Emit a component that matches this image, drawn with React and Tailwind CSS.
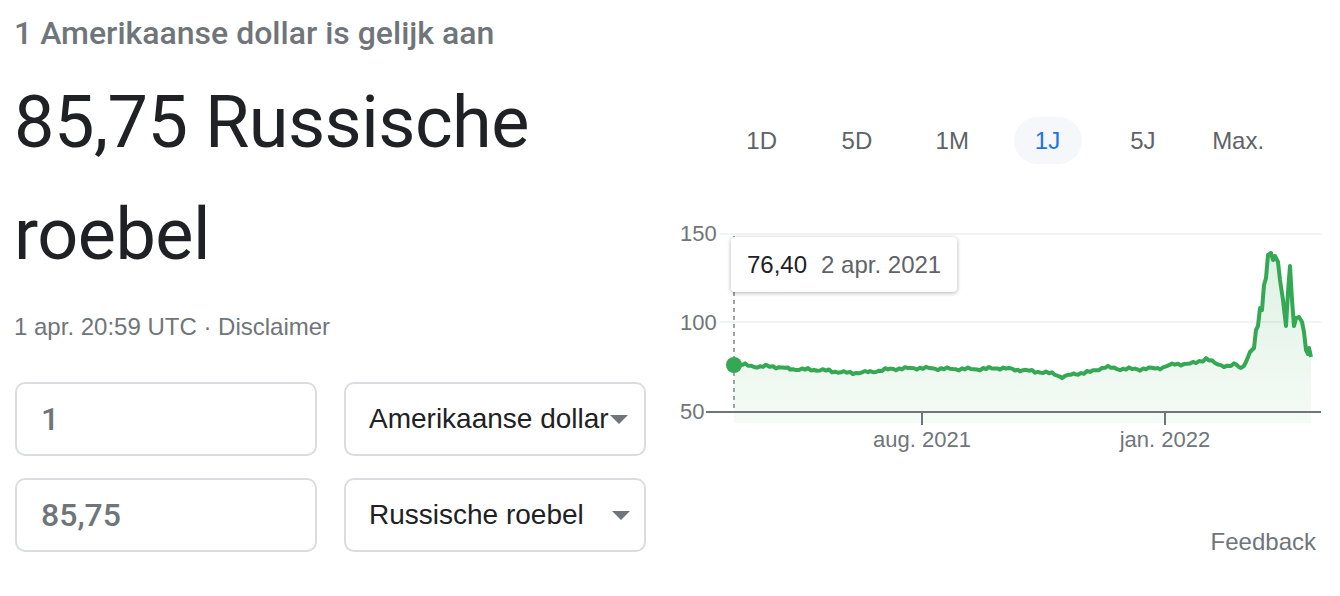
import React from "react";

const keys = [
  [734, 365], [745, 365], [760, 367], [770, 366], [790, 369], [820, 370], [850, 373],
  [870, 372], [890, 369], [920, 368], [950, 369], [980, 369], [1000, 368], [1020, 370],
  [1040, 372], [1055, 374], [1062, 377], [1075, 374], [1090, 372], [1105, 367],
  [1120, 369], [1140, 369], [1160, 368], [1175, 364], [1190, 364], [1200, 361],
  [1206, 359], [1215, 363], [1228, 367], [1236, 364], [1241, 368], [1246, 362],
  [1250, 352], [1254, 348], [1256, 330], [1258, 326], [1260, 308], [1262, 310],
  [1264, 285], [1266, 278], [1268, 255], [1271, 253], [1273, 260], [1275, 256],
  [1278, 262], [1280, 280], [1283, 300], [1286, 326], [1288, 292], [1290, 266],
  [1292, 300], [1294, 326], [1296, 318], [1299, 317], [1302, 322], [1304, 332],
  [1306, 350], [1308, 354], [1309, 348], [1311, 357],
];

const buildPoints = () => {
  const pts = [];
  for (let i = 0; i < keys.length - 1; i++) {
    const [x0, y0] = keys[i];
    const [x1, y1] = keys[i + 1];
    const step = x0 < 1245 ? 3 : 1;
    for (let x = x0; x < x1; x += step) {
      const t = (x - x0) / (x1 - x0);
      let y = y0 + (y1 - y0) * t;
      if (x > 738 && x < 1245) {
        y += Math.sin(x * 0.9) * 0.9 + Math.sin(x * 0.31) * 0.8;
      }
      pts.push([x, y]);
    }
  }
  pts.push(keys[keys.length - 1]);
  return pts;
};

const points = buildPoints();
const linePath = points.map((p, i) => `${i ? "L" : "M"}${p[0].toFixed(1)} ${p[1].toFixed(1)}`).join(" ");
const areaPath = `${linePath} L1311 423 L734 423 Z`;

const Arrow = () => (
  <svg width="18" height="9" viewBox="0 0 18 9" className="flex-shrink-0">
    <path d="M0 0 L18 0 L9 9 Z" fill="#70757a" />
  </svg>
);

const tabs = ["1D", "5D", "1M", "1J", "5J", "Max."];

const App = () => {
  return (
    <div className="w-[1340px] h-[596px] bg-white flex overflow-hidden" style={{ fontFamily: "'Liberation Sans', Arial, sans-serif" }}>
      {/* Left: result + converter */}
      <div className="w-[670px] pl-[14px] flex flex-col">
        <div className="pt-[13px] text-[32px] leading-[40px] font-medium text-[#70757a]" style={{ fontFamily: "Roboto, sans-serif" }}>
          1 Amerikaanse dollar is gelijk aan
        </div>
        <div className="mt-[14px] text-[72px] leading-[112px] tracking-[-0.5px] text-[#202124]" style={{ fontFamily: "Roboto, sans-serif" }}>
          85,75 Russische roebel
        </div>
        <div className="mt-[20px] text-[24px] leading-[32px] text-[#70757a]">
          1 apr. 20:59 UTC · Disclaimer
        </div>

        <div className="mt-[39px] flex flex-col gap-[22px]">
          {[
            ["1", "Amerikaanse dollar", true],
            ["85,75", "Russische roebel", false],
          ].map(([val, cur, tight]) => (
            <div key={cur} className="flex gap-[27px] pl-[1px]">
              <div className="w-[302px] h-[74px] border-2 border-[#dadce0] rounded-[10px] flex items-center pl-[24px] text-[32px] font-medium text-[#70757a]" style={{ fontFamily: "Roboto, sans-serif" }}>
                {val}
              </div>
              <div className={`w-[302px] h-[74px] border-2 border-[#dadce0] rounded-[10px] flex items-center pl-[23px] ${tight ? "pr-[16px]" : "pr-[14px]"} text-[28px] text-[#202124]`}>
                <span className="flex-1 whitespace-nowrap overflow-hidden">{cur}</span>
                <Arrow />
              </div>
            </div>
          ))}
        </div>
      </div>

      {/* Right: chart */}
      <div className="w-[670px] flex flex-col">
        <div className="mt-[117px] h-[47px] flex pl-[44px]">
          {tabs.map((t) => (
            <div key={t} className="w-[95.3px] flex justify-center items-center">
              {t === "1J" ? (
                <span className="h-[47px] w-[68px] rounded-full bg-[#f5f7fa] flex items-center justify-center text-[24px] text-[#1a73e8]">
                  {t}
                </span>
              ) : (
                <span className="text-[24px] text-[#5f6368]">{t}</span>
              )}
            </div>
          ))}
        </div>

        <div className="relative mt-[51px] h-[260px]">
          <svg width="670" height="260" viewBox="670 215 670 260" className="block">
            <defs>
              <linearGradient id="fill" x1="0" y1="0" x2="0" y2="1">
                <stop offset="0" stopColor="#34a853" stopOpacity="0.16" />
                <stop offset="1" stopColor="#34a853" stopOpacity="0.05" />
              </linearGradient>
            </defs>
            <line x1="720" y1="234" x2="1321" y2="234" stroke="#f1f3f4" strokeWidth="2" />
            <line x1="720" y1="322" x2="1321" y2="322" stroke="#f1f3f4" strokeWidth="2" />
            <path d={areaPath} fill="url(#fill)" />
            <line x1="706" y1="412" x2="1321" y2="412" stroke="#70757a" strokeWidth="2" />
            <line x1="922" y1="412" x2="922" y2="425" stroke="#70757a" strokeWidth="2" />
            <line x1="1165" y1="412" x2="1165" y2="425" stroke="#70757a" strokeWidth="2" />
            <line x1="734" y1="236" x2="734" y2="411" stroke="#80868b" strokeWidth="1.5" strokeDasharray="4 4" />
            <path d={linePath} fill="none" stroke="#34a853" strokeWidth="4" strokeLinejoin="round" />
            <circle cx="734" cy="365" r="8" fill="#34a853" />
            <g fill="#70757a" fontSize="22" fontFamily="'Liberation Sans', Arial, sans-serif">
              <text x="680" y="241">150</text>
              <text x="680" y="330">100</text>
              <text x="680" y="419">50</text>
              <text x="922" y="447" textAnchor="middle">aug. 2021</text>
              <text x="1165" y="447" textAnchor="middle">jan. 2022</text>
            </g>
          </svg>
          <div className="absolute left-[61px] top-[22px] w-[226px] h-[55px] bg-white rounded-[4px] shadow-[0_1px_4px_rgba(0,0,0,0.3)] flex items-center pl-[16px] gap-[14px] text-[24px]">
            <span className="text-[#202124]">76,40</span>
            <span className="text-[#5f6368]">2 apr. 2021</span>
          </div>
        </div>

        <div className="mt-[51px] pr-[24px] text-right text-[24px] leading-[32px] text-[#70757a]">
          Feedback
        </div>
      </div>
    </div>
  );
};

export default App;
